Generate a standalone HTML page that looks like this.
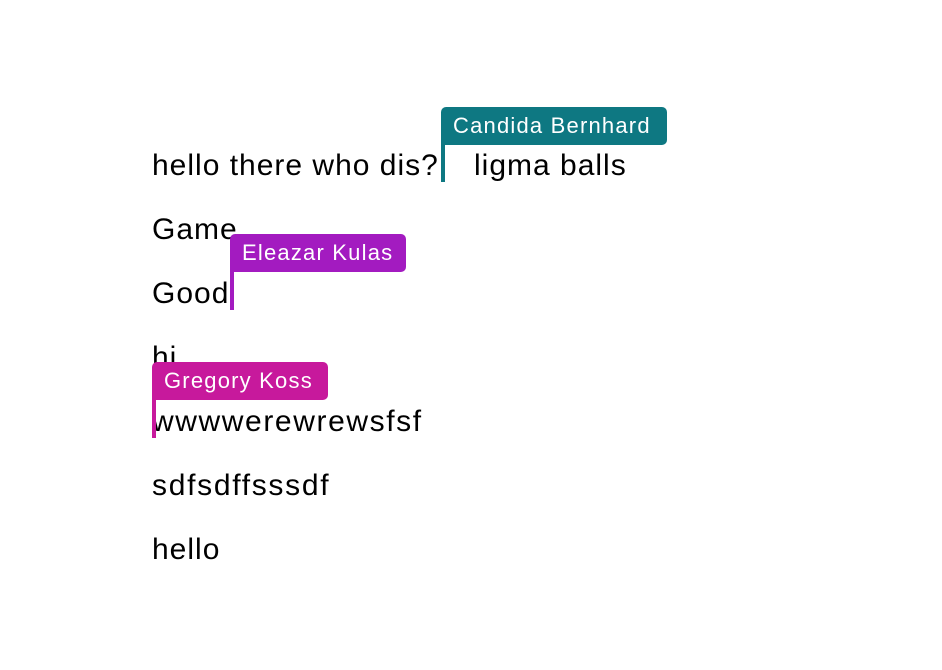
<!DOCTYPE html>
<html><head><style>
body{margin:0;width:942px;height:670px;background:#fff;font-family:"Liberation Sans",Arial,sans-serif;position:relative;overflow:hidden}
.t{position:absolute;left:152px;font-size:30px;letter-spacing:1px;color:#000;line-height:32px;white-space:nowrap}
.lab{position:absolute;height:38px;line-height:38px;color:#fff;font-size:22px;letter-spacing:1.2px;padding:0 12px;border-radius:5px;border-bottom-left-radius:0;white-space:nowrap;box-sizing:border-box}
.car{position:absolute;width:4px}
</style></head><body>
<div class="t" style="top:150px">hello there who dis?</div>
<div class="t" style="top:150px;left:474px">ligma balls</div>
<div class="t" style="top:214px">Game</div>
<div class="t" style="top:278px">Good</div>
<div class="t" style="top:342px">hi</div>
<div class="t" style="top:406px;letter-spacing:1.6px">wwwwerewrewsfsf</div>
<div class="t" style="top:470px;letter-spacing:1.7px">sdfsdffsssdf</div>
<div class="t" style="top:534px">hello</div>

<div class="lab" style="left:441px;top:107px;width:226px;background:#0e7882">Candida Bernhard</div>
<div class="car" style="left:441px;top:140px;height:42px;background:#0e7882"></div>

<div class="lab" style="left:230px;top:234px;width:176px;background:#a31bc0">Eleazar Kulas</div>
<div class="car" style="left:230px;top:268px;height:42px;background:#a31bc0"></div>

<div class="lab" style="left:152px;top:362px;width:176px;background:#c7199c">Gregory Koss</div>
<div class="car" style="left:152px;top:396px;height:42px;background:#c7199c"></div>
</body></html>
